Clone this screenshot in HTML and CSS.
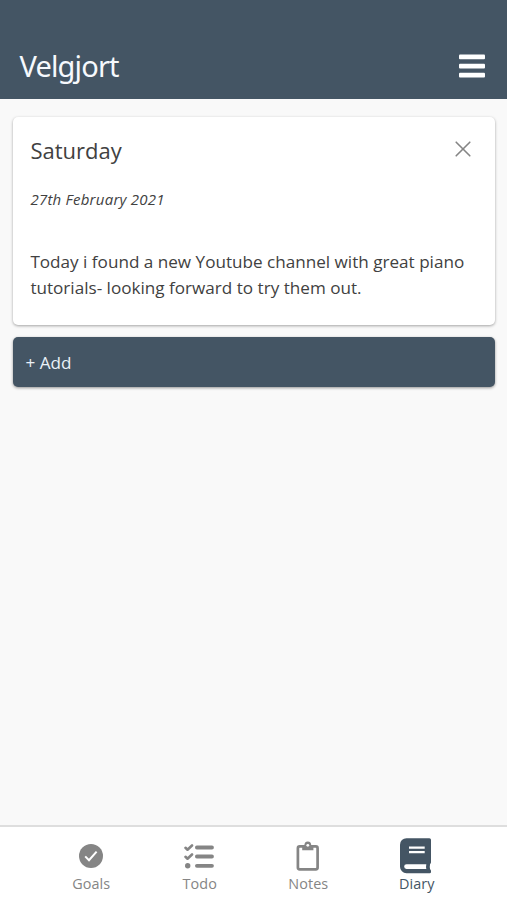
FILE: index.html
```html
<!DOCTYPE html>
<html lang="en">
<head>
<meta charset="utf-8">
<title>Velgjort</title>
<link rel="stylesheet" href="styles.css">
</head>
<body>
<header class="topbar">
  <h1 class="brand">Velgjort</h1>
  <button class="menu" aria-label="Menu"><svg width="26" height="24" viewBox="0 0 26 24"><g fill="#fff"><rect y=".4" width="26" height="4.8" rx="1"/><rect y="9.7" width="26" height="4.8" rx="1"/><rect y="18.8" width="26" height="4.8" rx="1"/></g></svg></button>
</header>
<main class="content">
  <article class="card">
    <div class="card-head">
      <h2 class="day">Saturday</h2>
      <button class="close" aria-label="Delete"><svg width="16" height="16" viewBox="0 0 16 16"><path d="M1.2 1.2 14.8 14.8M14.8 1.2 1.2 14.8" fill="none" stroke="#858585" stroke-width="1.6" stroke-linecap="round"/></svg></button>
    </div>
    <p class="date">27th February 2021</p>
    <p class="entry">Today i found a new Youtube channel with great piano<br>tutorials- looking forward to try them out.</p>
  </article>
  <button class="add">+ Add</button>
</main>
<nav class="tabs">
  <a class="tab"><span class="icon"><svg width="24" height="24" viewBox="0 0 24 24"><circle cx="12" cy="12" r="12" fill="#858585"/><path d="M6.2 12.4 10 16.2 17.6 7.6" fill="none" stroke="#fff" stroke-width="2"/></svg></span><span class="label">Goals</span></a>
  <a class="tab"><span class="icon"><svg width="31" height="25" viewBox="0 0 31 25"><g fill="none" stroke="#858585" stroke-linecap="round" stroke-linejoin="round"><path d="M1.5 3.8 3.5 5.7 8 1.5M1.5 12.8 3.5 14.7 8 10.5" stroke-width="2.6"/><path d="M12.9 3.5H28M12.9 12.5H28M12.9 21.8H28" stroke-width="3.8"/></g><circle cx="3.7" cy="21.8" r="2.7" fill="#858585"/></svg></span><span class="label">Todo</span></a>
  <a class="tab"><span class="icon"><svg width="24" height="30" viewBox="0 0 24 30"><rect x="1.9" y="5.4" width="19.7" height="23" rx="1.8" fill="none" stroke="#858585" stroke-width="2.7"/><path d="M6.2 5H8.3a3.5 4.4 0 0 1 7 0h2.1v4.2H6.2z" fill="#858585"/><circle cx="11.8" cy="4.3" r="1.4" fill="#fff"/></svg></span><span class="label">Notes</span></a>
  <a class="tab active"><span class="icon"><svg width="31" height="36" viewBox="0 0 31 36"><path fill="#445564" fill-rule="evenodd" d="M6.5.2H29.4A1.6 1.6 0 0 1 31 1.8V24.2Q31 25.2 30.1 25.9Q29.5 28.5 30.1 31.2Q31 31.8 31 33V34Q31 35.2 29.7 35.2H6.5A6.5 6.5 0 0 1 0 28.7V6.7A6.5 6.5 0 0 1 6.5.2ZM9 8.5V10.7H24.7V8.5ZM9 13V15.2H24.7V13ZM6.5 26.2A2.3 2.3 0 0 0 6.5 30.9H26.3Q25.8 28.6 26.3 26.2Z"/></svg></span><span class="label">Diary</span></a>
</nav>
</body>
</html>
```

FILE: styles.css
```css
* { box-sizing: border-box; }
body {
  margin: 0;
  height: 900px;
  display: flex;
  flex-direction: column;
  overflow: hidden;
  background: #f9f9f9;
  color: #414141;
  font-family: "Open Sans", sans-serif;
}
h1, h2, p { margin: 0; font-weight: 400; }
button { border: 0; padding: 0; background: none; font: inherit; }
.topbar {
  flex: none;
  height: 98.5px;
  padding: 33px 22px 0 19.5px;
  display: flex;
  align-items: center;
  justify-content: space-between;
  background: #445564;
}
.brand {
  color: #f6f9fd;
  font-family: "Noto Sans", sans-serif;
  font-size: 29px;
  line-height: 40px;
  letter-spacing: -0.85px;
}
.content { flex: 1; padding: 18px 12.5px 0 13px; }
.card {
  height: 208px;
  padding: 16px 24px 0 17.4px;
  border-radius: 5px;
  background: #fff;
  box-shadow: 0 1px 3px rgba(0, 0, 0, .35);
}
.card-head { display: flex; justify-content: space-between; height: 34px; }
.day { font-size: 22px; line-height: 34px; }
.close { height: 16px; margin-top: 8px; }
.menu svg, .close svg, .icon svg { display: block; }
.date {
  margin-top: 20px;
  font-size: 15px;
  font-style: italic;
  line-height: 24px;
  letter-spacing: 0.24px;
}
.entry { margin-top: 38px; font-size: 17.12px; line-height: 26px; white-space: nowrap; }
.add {
  display: block;
  width: 100%;
  height: 50px;
  margin-top: 12px;
  padding: 1px 0 0 12.5px;
  border-radius: 5px;
  background: #445564;
  color: #eaf1f8;
  font-size: 17.1px;
  text-align: left;
  box-shadow: 0 1px 3px rgba(0, 0, 0, .4);
}
.tabs {
  flex: none;
  height: 75px;
  padding: 11px 36px 0 37px;
  display: grid;
  grid-template-columns: repeat(4, 1fr);
  border-top: 2px solid #dedede;
  background: #fff;
}
.tab { display: flex; flex-direction: column; align-items: center; color: #858585; }
.icon { height: 36px; display: flex; align-items: center; }
.label { font-size: 14.4px; line-height: 20px; letter-spacing: 0.1px; }
.active { color: #445564; }
.active .icon { position: relative; left: -1.5px; }
```
